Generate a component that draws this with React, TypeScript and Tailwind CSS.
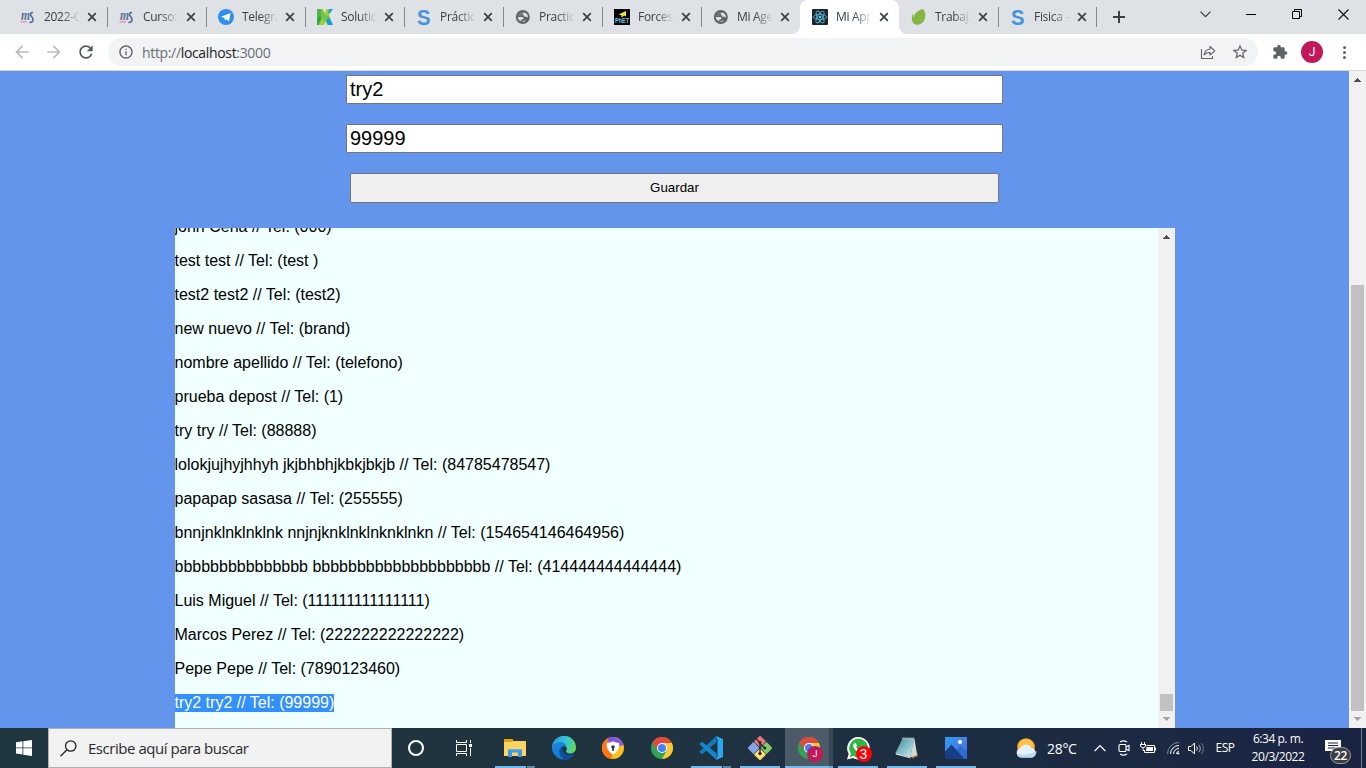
import React from "react";

const UI = "font-['Open_Sans','Noto_Sans',sans-serif]";

/* ---------- tab icons ---------- */

function MsIcon() {
  return (
    <svg width="16" height="16" viewBox="0 0 16 16" className="overflow-visible">
      <text x="1" y="11" fontSize="15" fontStyle="italic" fontWeight="bold" fontFamily="Liberation Serif" fill="#5a7199" textLength="9" lengthAdjust="spacingAndGlyphs">m</text>
      <path d="M13 3.500c-2.200 0-3 1.200-2.300 2.800.6 1.500 2.300 2 2.300 4.200 0 1.900-1.500 3-3.500 3" fill="none" stroke="#4a648e" strokeWidth="1.500" />
      <path d="M0.500 12.800h6.500" stroke="#ee9aa0" strokeWidth="1.600" />
    </svg>
  );
}

function TelegramIcon() {
  return (
    <svg width="16" height="16" viewBox="0 0 16 16">
      <circle cx="8" cy="8" r="8" fill="#2f8ded" />
      <path d="M3 7.800 12.600 4 11 12.200 8.300 10.300 6.900 11.600 6.500 9.100z" fill="#fff" />
      <path d="M6.700 9.200 10.600 5.900 7.300 9.800z" fill="#b5d7fa" />
    </svg>
  );
}

function KIcon() {
  return (
    <svg width="16" height="16" viewBox="0 0 16 16">
      <path d="M0 0h4.500v16H0z" fill="#4cb648" />
      <path d="M0 9l4.500-3v10H0z" fill="#2ea84a" />
      <path d="M9.500 0H15L7 16H1.500z" fill="#a0cf3c" />
      <path d="M4 0h1.500l4 8-2.500 5-3-6z" fill="#7cc242" />
      <path d="M12.500 0H16l-3.500 4.500-1.500-1.300z" fill="#06a3e0" />
      <path d="M9.500 7l2-1.500L16 16h-5.500L8 10.500z" fill="#7fc241" />
      <path d="M9 11.500l3-3L16 16h-5z" fill="#0a9fe3" />
    </svg>
  );
}

function SIcon() {
  return (
    <svg width="16" height="16" viewBox="0 0 16 16" className="overflow-visible">
      <text x="1" y="15.600" fontSize="21.500" fontWeight="bold" fontFamily="Liberation Sans" fill="#4693db" textLength="13.500" lengthAdjust="spacingAndGlyphs">S</text>
    </svg>
  );
}

function GlobeIcon() {
  return (
    <svg width="16" height="16" viewBox="0 0 16 16">
      <circle cx="7.800" cy="8" r="7" fill="#5f6368" />
      <path d="M2.700 7.200C3 4.800 4.800 3 7.300 2.700L8.600 4 7 5.200v1.300L5.300 7.300z" fill="#dee1e6" opacity=".15" />
      <path d="M9.200 3.400c-1 .4-1.700 1-1.700 1.700 0 .9 1.300.6 1.300 1.500 0 1 1 1.400 2.200 1.200 1-.1 1.100.8 2 .6.2-2.400-1.600-4.400-3.800-5z" fill="#dee1e6" />
      <path d="M2.800 7.900h3.900c1.300 0 1.800.7 1.800 1.500 0 .9-.8 1-1.700 1-.6 0-.6 1.200-1.300 1.600C4 11.200 2.900 9.800 2.800 7.900z" fill="#dee1e6" />
      <path d="M6.700 13l2.800-1.600 1.300.4C9.700 12.800 8.300 13.200 6.700 13z" fill="#dee1e6" />
    </svg>
  );
}

function PhetIcon() {
  return (
    <svg width="16" height="16" viewBox="0 0 16 16">
      <rect width="16" height="16" fill="#050505" />
      <path d="M4.500 5.500 12 2v5.500l-2-1-2.500 2.300L7.300 6z" fill="#f4e53b" />
      <text x="1" y="14.300" fontSize="6.500" fontWeight="bold" fontFamily="Liberation Sans" fill="#6dc8e8" textLength="14" lengthAdjust="spacingAndGlyphs">PhET</text>
    </svg>
  );
}

function ReactIcon() {
  return (
    <svg width="16" height="16" viewBox="0 0 16 16">
      <rect width="16" height="16" rx="1" fill="#20232a" />
      <g fill="none" stroke="#4fb3cc" strokeWidth="0.900">
        <ellipse cx="8" cy="8" rx="6.600" ry="2.600" />
        <ellipse cx="8" cy="8" rx="6.600" ry="2.600" transform="rotate(60 8 8)" />
        <ellipse cx="8" cy="8" rx="6.600" ry="2.600" transform="rotate(120 8 8)" />
      </g>
      <circle cx="8" cy="8" r="1.300" fill="#5cd3f0" />
    </svg>
  );
}

function LeafIcon() {
  return (
    <svg width="16" height="16" viewBox="0 0 16 16">
      <path d="M12 .3c2.300 1.500 3 6.500 1.500 10.200-1.500 4-5.500 6-9 5C1 14.500.5 10 1 7.500c.2-1.300.6-2.200.9-2.500.4 0 .5 3 .9 3.800C3 5 7 .8 12 .3z" fill="#82b541" />
    </svg>
  );
}

type Tab = { title: string; icon: () => React.ReactElement; active?: boolean; sep?: string };

const MID = "-mr-px";
const END = "mr-0";

const TABS: Tab[] = [
  { title: "2022-C", icon: MsIcon, sep: MID },
  { title: "Curso:", icon: MsIcon, sep: MID },
  { title: "Telegra", icon: TelegramIcon, sep: MID },
  { title: "Solutio", icon: KIcon, sep: MID },
  { title: "Práctic", icon: SIcon, sep: MID },
  { title: "Practic", icon: GlobeIcon, sep: MID },
  { title: "Forces", icon: PhetIcon, sep: MID },
  { title: "Mi Age", icon: GlobeIcon },
  { title: "Mi App", icon: ReactIcon, active: true },
  { title: "Trabaja", icon: LeafIcon, sep: MID },
  { title: "Fisica -", icon: SIcon, sep: END },
];

function TabItem({ title, icon: Icon, active, sep }: Tab) {
  return (
    <div className={`relative flex h-[34px] w-[99px] shrink-0 items-center pl-3 ${active ? "rounded-t-lg bg-white" : ""}`}>
      {active && (
        <>
          <svg className="absolute bottom-0 -left-2" width="8" height="8" viewBox="0 0 8 8"><path d="M8 0v8H0a8 8 0 0 0 8-8z" fill="#fff" /></svg>
          <svg className="absolute -right-2 bottom-0" width="8" height="8" viewBox="0 0 8 8"><path d="M0 0v8h8a8 8 0 0 1-8-8z" fill="#fff" /></svg>
        </>
      )}
      <Icon />
      <span className="ml-2 w-[36px] text-[12px] leading-4 tracking-[-0.3px] whitespace-nowrap text-[#3c4043] [mask-image:linear-gradient(to_right,black_50%,transparent_100%)]">
        {title}
      </span>
      <svg className="ml-[7px]" width="10" height="10" viewBox="0 0 10 10">
        <path d="M1.200 1.200l7.600 7.600M8.800 1.200L1.200 8.800" stroke="#3c4043" strokeWidth="1.700" />
      </svg>
      {sep && <span className={`ml-auto h-5 w-px bg-[#85888d] ${sep}`} />}
    </div>
  );
}

function TabStrip() {
  return (
    <div className="flex h-[34px] bg-[#dee1e6] pl-2">
      {TABS.map((t, i) => <TabItem key={i} {...t} />)}
      <div className="flex w-[43px] items-center justify-center">
        <svg width="12" height="12" viewBox="0 0 12 12"><path d="M6 0v12M0 6h12" stroke="#3c4043" strokeWidth="2" /></svg>
      </div>
      <div className="ml-auto flex h-7">
        <div className="flex w-[46px] items-center justify-center">
          <svg width="11" height="7" viewBox="0 0 11 7"><path d="M.5 .7l5 5 5-5" fill="none" stroke="#333" strokeWidth="1.100" /></svg>
        </div>
        <div className="flex w-[46px] items-center justify-center pt-px"><span className="h-px w-[10px] bg-black" /></div>
        <div className="flex w-[46px] items-center justify-center">
          <svg width="10" height="10" viewBox="0 0 10 10"><path d="M.5 2.500h7v7h-7zM2.500 2.500v-2h7v7h-2" fill="none" stroke="#000" /></svg>
        </div>
        <div className="flex w-[46px] items-center justify-center">
          <svg width="11" height="11" viewBox="0 0 11 11"><path d="M.5 .5l10 10M10.500 .5l-10 10" stroke="#111" strokeWidth="1.100" /></svg>
        </div>
      </div>
    </div>
  );
}

function Glyph({ d, size, color, className = "" }: { d: string; size: number; color: string; className?: string }) {
  return (
    <div className={`flex w-8 shrink-0 items-center justify-center ${className}`}>
      <svg width={size} height={size} viewBox="0 0 24 24" fill={color}><path d={d} /></svg>
    </div>
  );
}

const BACK = "M20 11H7.830l5.590-5.590L12 4l-8 8 8 8 1.410-1.410L7.830 13H20v-2z";
const FORWARD = "M4 11h12.170l-5.590-5.590L12 4l8 8-8 8-1.410-1.410L16.170 13H4v-2z";
const RELOAD = "M17.650 6.350C16.200 4.900 14.210 4 12 4c-4.420 0-7.990 3.580-7.990 8s3.570 8 7.990 8c3.730 0 6.840-2.550 7.730-6h-2.080c-.82 2.330-3.040 4-5.650 4-3.310 0-6-2.690-6-6s2.690-6 6-6c1.660 0 3.140.69 4.220 1.780L13 11h7V4l-2.350 2.350z";
const INFO = "M11 7h2v2h-2zm0 4h2v6h-2zm1-9C6.480 2 2 6.480 2 12s4.480 10 10 10 10-4.480 10-10S17.520 2 12 2zm0 18c-4.410 0-8-3.590-8-8s3.590-8 8-8 8 3.590 8 8-3.590 8-8 8z";
const STAR = "M22 9.240l-7.190-.62L12 2 9.190 8.630 2 9.240l5.460 4.730L5.820 21 12 17.270 18.180 21l-1.630-7.030L22 9.240zM12 15.400l-3.760 2.270 1-4.280-3.320-2.880 4.380-.38L12 6.100l1.710 4.040 4.380.38-3.320 2.880 1 4.280L12 15.400z";
const PUZZLE = "M20.500 11H19V7c0-1.100-.9-2-2-2h-4V3.500C13 2.120 11.880 1 10.500 1S8 2.120 8 3.500V5H4c-1.100 0-1.990.9-1.990 2v3.800H3.500c1.490 0 2.700 1.210 2.700 2.700s-1.210 2.700-2.700 2.700H2V20c0 1.100.9 2 2 2h3.800v-1.500c0-1.490 1.210-2.700 2.700-2.700 1.490 0 2.700 1.210 2.700 2.700V22H17c1.100 0 2-.9 2-2v-4h1.500c1.380 0 2.500-1.120 2.500-2.500S21.880 11 20.500 11z";

function Toolbar() {
  return (
    <div className="flex h-[37px] items-center border-b border-[#d5d8dd] bg-white pl-[6px]">
      <Glyph d={BACK} size={20} color="#babcbe" />
      <Glyph d={FORWARD} size={20} color="#babcbe" />
      <Glyph d={RELOAD} size={20} color="#55595e" />
      <div className="ml-[6px] flex h-7 w-[1150px] items-center rounded-full bg-[#f1f3f4] pr-[2px] pl-[2px]">
        <Glyph d={INFO} size={16} color="#5f6368" />
        <span className="text-[14px] tracking-[-0.34px] text-[#6b6f74]">
          http://<span className="text-[#202124]">localhost</span>:3000
        </span>
        <div className="ml-auto flex w-8 items-center justify-center">
          <svg width="16" height="15" viewBox="0 0 16 15" fill="none" stroke="#5f6368" strokeWidth="1.100">
            <path d="M1.500 4v9.500h11V11" />
            <path d="M4.200 9.800C4.600 6.300 6.500 4.300 10 4.200V1.500l4.800 4.300L10 10V7.500C7.200 7.400 5.600 8.200 4.200 9.800z" strokeLinejoin="round" />
          </svg>
        </div>
        <Glyph d={STAR} size={18} color="#5f6368" />
      </div>
      <Glyph d={PUZZLE} size={16} color="#5f6368" className="ml-[6px]" />
      <div className="flex w-8 justify-center">
        <span className="flex h-[22px] w-[22px] items-center justify-center rounded-full bg-[#c2185b] font-['Roboto',sans-serif] text-[12px] text-white">J</span>
      </div>
      <div className="flex w-[33px] flex-col items-center gap-[2px]">
        <span className="h-[3px] w-[3px] rounded-full bg-[#5f6368]" />
        <span className="h-[3px] w-[3px] rounded-full bg-[#5f6368]" />
        <span className="h-[3px] w-[3px] rounded-full bg-[#5f6368]" />
      </div>
    </div>
  );
}

/* ---------- page ---------- */

function Scrollbar({ thumb }: { thumb: string }) {
  return (
    <div className="flex w-[17px] shrink-0 flex-col items-center justify-between bg-[#f1f1f1]">
      <svg width="17" height="17" viewBox="0 0 17 17" shapeRendering="crispEdges"><path d="M8 7h1v1h1v1h1v1h1v1H5v-1h1V9h1V8h1z" fill="#505050" /></svg>
      <div className="flex flex-col items-center">
        <div className={`w-[13px] bg-[#c1c1c1] ${thumb}`} />
        <svg width="17" height="17" viewBox="0 0 17 17" shapeRendering="crispEdges"><path d="M5 6h7v1h-1v1h-1v1H9v1H8V9H7V8H6V7H5z" fill="#a3a3a3" /></svg>
      </div>
    </div>
  );
}

const CONTACTS = [
  "john Cena // Tel: (000)",
  "test test // Tel: (test )",
  "test2 test2 // Tel: (test2)",
  "new nuevo // Tel: (brand)",
  "nombre apellido // Tel: (telefono)",
  "prueba depost // Tel: (1)",
  "try try // Tel: (88888)",
  "lolokjujhyjhhyh jkjbhbhjkbkjbkjb // Tel: (84785478547)",
  "papapap sasasa // Tel: (255555)",
  "bnnjnklnklnklnk nnjnjknklnklnknklnkn // Tel: (154654146464956)",
  "bbbbbbbbbbbbbbb bbbbbbbbbbbbbbbbbbbb // Tel: (414444444444444)",
  "Luis Miguel // Tel: (111111111111111)",
  "Marcos Perez // Tel: (222222222222222)",
  "Pepe Pepe // Tel: (7890123460)",
  "try2 try2 // Tel: (99999)",
];

function Page() {
  return (
    <div className="flex h-[657px] font-['Liberation_Sans',Arial,sans-serif] text-black">
      <main className="flex flex-1 flex-col bg-[#6495ed] pt-1">
        <div className="ml-[346px] flex w-[657px] flex-col items-center gap-5">
          <input className="h-[29px] w-full rounded-[1px] border border-[#767676] bg-white px-[3px] text-[20px] leading-6 outline-none" defaultValue="try2" />
          <input className="h-[29px] w-full rounded-[1px] border border-[#767676] bg-white px-[3px] text-[20px] leading-6 outline-none" defaultValue="99999" />
          <button className="h-[30px] w-[649px] rounded-[2px] border border-[#767676] bg-[#efefef] text-[13.333px]">Guardar</button>
        </div>
        <section className="mt-[25px] flex h-[500px] w-[1175px] pl-[175px]">
          <div className="flex flex-1 flex-col items-start justify-end gap-4 overflow-hidden bg-[#f0ffff] pb-4">
            {CONTACTS.map((c, i) => (
              <p key={i} className={`-ml-[0.5px] h-[18px] shrink-0 text-[16px] leading-[18px] whitespace-nowrap ${i === 14 ? "bg-[#3390ff] text-white" : ""}`}>{c}</p>
            ))}
          </div>
          <Scrollbar thumb="h-[17px]" />
        </section>
      </main>
      <Scrollbar thumb="h-[426px]" />
    </div>
  );
}

/* ---------- taskbar ---------- */

function ChromeLogo({ size = 22 }: { size?: number }) {
  return (
    <svg width={size} height={size} viewBox="0 0 24 24">
      <circle cx="12" cy="12" r="12" fill="#2fa553" />
      <path d="M12 12 1.600 6A12 12 0 0 1 22.400 6z" fill="#e04a3f" />
      <path d="M12 6.500h10.700A12 12 0 0 1 12 24l5-9z" fill="#fcc934" />
      <path d="M1.600 6 7 15l5-8.500h10.700L22 5.300A12 12 0 0 0 1.600 6z" fill="#e04a3f" />
      <circle cx="12" cy="12" r="5.500" fill="#fff" />
      <circle cx="12" cy="12" r="4.400" fill="#4285f4" />
    </svg>
  );
}

function ExplorerLogo() {
  return (
    <svg width="22" height="20" viewBox="0 0 22 20">
      <path d="M0 3h22v15H0z" fill="#fcd462" />
      <path d="M0 1h8.500l1 1.500-1 1.500H0z" fill="#e3a008" />
      <path d="M4 11h14v8h-4v-4.500H8V19H4z" fill="#3f98e4" />
      <path d="M4 11h14v1.500H4z" fill="#5ab0f0" />
    </svg>
  );
}

function EdgeLogo() {
  return (
    <svg width="24" height="24" viewBox="0 0 24 24">
      <defs>
        <linearGradient id="edgeTop" x1="0" x2="1" y1=".3" y2=".6"><stop offset="0" stopColor="#249fe5" /><stop offset=".55" stopColor="#36c7d3" /><stop offset="1" stopColor="#65da58" /></linearGradient>
        <linearGradient id="edgeSide" x1="0" x2="0" y1="0" y2="1"><stop offset="0" stopColor="#1a87db" /><stop offset="1" stopColor="#1277cf" /></linearGradient>
      </defs>
      <path d="M0 12A12 12 0 0 1 24 11.500c0 4-3 6-6 6-2.500 0-4-1-4-2.200 0-.8 1-1.300 1-3L12 9z" fill="url(#edgeTop)" />
      <path d="M0 12c.5-4 4.500-6 8-6 4 0 7.200 3 7 6-.3-1.500-2-2.500-3.500-2-3 1.500-2 9.500 5 9.500 2 0 4-.6 5.500-1.300A12 12 0 0 1 0 12z" fill="url(#edgeSide)" />
      <path d="M11.500 10c-5 .5-6.500 9 1 14 4-.1 7.700-2.300 9.700-5.500.2-.5-.2-.7-.6-.5-5.800 2.600-11.400-.8-10.900-5.500.1-1 .4-1.900.8-2.500z" fill="#114f9c" />
    </svg>
  );
}

function ShieldLogo() {
  return (
    <svg width="22" height="22" viewBox="0 0 22 22">
      <circle cx="11" cy="11" r="11" fill="#fcc021" />
      <path d="M5 1.800A11 11 0 0 1 21.500 8L11 11z" fill="#8652e8" />
      <path d="M5 1.800A11 11 0 0 0 9.500 21.900L11 11z" fill="#ff7519" />
      <path d="M11 4.200c2 1.200 4 1.500 6.300 1.500.5 5-1.800 9.500-6.300 11.800-4.500-2.300-6.800-6.800-6.300-11.800 2.300 0 4.300-.3 6.300-1.500z" fill="#fff" />
      <circle cx="11" cy="10" r="1.700" fill="#29334b" /><path d="M10.200 10h1.600v4h-1.600z" fill="#29334b" />
    </svg>
  );
}

function CodeLogo() {
  return (
    <svg width="24" height="24" viewBox="0 0 24 24">
      <path d="M17.500 0v6.200L3 18.200 .3 15.800z" fill="#1279be" />
      <path d="M.3 8 3 5.700l14.500 11.600V24z" fill="#1387cf" />
      <path d="M17 0l7 3v18l-7 3 1.500-4V4z" fill="#2aa7f2" />
    </svg>
  );
}

function GitLogo() {
  return (
    <svg width="24" height="24" viewBox="0 0 24 24">
      <g strokeWidth="2" strokeLinejoin="round">
        <path d="M12 1l4.700 4.500L12 10 7.300 5.500z" fill="#ee7578" stroke="#ee7578" />
        <path d="M5.500 7.300l4.500 4.700-4.500 4.700L1 12z" fill="#86a6e8" stroke="#86a6e8" />
        <path d="M18.500 7.300L23 12l-4.500 4.700L14 12z" fill="#82ca66" stroke="#82ca66" />
        <path d="M12 14l4.700 4.500L12 23l-4.700-4.500z" fill="#ffdf73" stroke="#ffdf73" />
      </g>
      <path d="M8 2.500 12 6.500v11M12 7.500l4.500 4.500" stroke="#293035" strokeWidth="1.300" fill="none" />
      <circle cx="12" cy="6.500" r="1.600" fill="#293035" /><circle cx="12" cy="17.500" r="1.700" fill="#293035" /><circle cx="16.800" cy="12" r="1.600" fill="#293035" />
    </svg>
  );
}

function ProfileChrome() {
  return (
    <span className="relative flex">
      <ChromeLogo />
      <span className="absolute top-[9px] left-[9px] flex h-4 w-4 items-center justify-center rounded-full bg-[#c2185b] font-['Roboto',sans-serif] text-[9px] leading-none text-white">J</span>
    </span>
  );
}

function WhatsLogo() {
  return (
    <span className="relative flex">
      <svg width="23" height="23" viewBox="0 0 23 23">
        <path d="M11.500 0a11.200 11.200 0 1 1-5.600 20.900L0 22.500l1.700-5.700A11.200 11.200 0 0 1 11.500 0z" fill="#fff" />
        <path d="M11.500 1.800a9.400 9.400 0 1 1-5 17.300l-3.700 1 1.100-3.600A9.400 9.400 0 0 1 11.500 1.800z" fill="#2cb742" />
        <path d="M7.500 6c.6-.5 1.300-.3 1.500.2l.9 2c.2.600-.9 1.500-.7 1.900.9 1.700 2 2.800 3.700 3.500.6.2 1.200-1.400 1.900-1.100l2.200 1c.7 1-1 3-2.600 2.900-4-.2-8.500-5-8.200-8.300.1-.9.600-1.600 1.300-2.100z" fill="#fff" />
      </svg>
      <span className="absolute top-[9px] left-[9px] flex h-4 w-4 items-center justify-center rounded-full bg-[#fb0006] font-['Liberation_Sans',sans-serif] text-[14px] leading-none text-white">3</span>
    </span>
  );
}

function NotepadLogo() {
  return (
    <svg width="24" height="22" viewBox="0 0 24 22">
      <defs><linearGradient id="note" x1="0" x2="1" y1="0" y2="1"><stop offset="0" stopColor="#3f8798" /><stop offset=".6" stopColor="#93c8d2" /><stop offset="1" stopColor="#e6f2f2" /></linearGradient></defs>
      <path d="M18 2l5 17-6 2.500z" fill="#a98558" />
      <path d="M7.500 1.500h12L15 20.500 .5 16z" fill="url(#note)" />
      <path d="M.5 16 15 20.500l1 1L1 17.500z" fill="#eef3f3" />
      <path d="M19.500 1.500 22 18l-7 2.500z" fill="#d5d9d5" />
      <path d="M7.500 1.500h12" stroke="#dfe5e5" strokeWidth="2" strokeDasharray="1 1" />
    </svg>
  );
}

function PhotosLogo() {
  return (
    <svg width="22" height="22" viewBox="0 0 22 22">
      <defs><linearGradient id="sky" x1="0" x2="1" y1="0" y2="1"><stop offset="0" stopColor="#2f9df0" /><stop offset="1" stopColor="#5965df" /></linearGradient></defs>
      <rect width="22" height="22" fill="url(#sky)" />
      <path d="M11 13l5-4.500 6 6V22H11z" fill="#2d6bd0" />
      <path d="M0 14.500l6.500-7L19.500 22H0z" fill="#173f86" />
      <circle cx="15" cy="5" r="2.100" fill="#fff" />
    </svg>
  );
}

type AppEntry = { icon: React.ReactElement; bar: string };

const APPS: AppEntry[] = [
  { icon: <ExplorerLogo />, bar: "multi" },
  { icon: <EdgeLogo />, bar: "" },
  { icon: <ShieldLogo />, bar: "" },
  { icon: <ChromeLogo />, bar: "" },
  { icon: <CodeLogo />, bar: "multi" },
  { icon: <GitLogo />, bar: "single" },
  { icon: <ProfileChrome />, bar: "active" },
  { icon: <WhatsLogo />, bar: "single" },
  { icon: <NotepadLogo />, bar: "single" },
  { icon: <PhotosLogo />, bar: "single" },
];

function AppButton({ icon, bar }: AppEntry) {
  const active = bar === "active";
  return (
    <div className="flex h-10 w-[49px] shrink-0 pl-px">
      <div className={`flex w-12 flex-col items-center ${active ? "bg-linear-to-r from-[#4b5b67] from-[44px] via-[#2c3b48] via-[44px] to-[#3b4a58] to-[45px]" : ""}`}>
        <div className="flex h-[38px] items-center pt-[2px]">{icon}</div>
        {bar === "multi" && <div className="flex h-[2px] w-10"><span className="w-[31px] bg-[#76b9ed]" /><span className="ml-px flex-1 bg-[#5b87aa]" /></div>}
        {bar === "single" && <div className="h-[2px] w-10 bg-[#76b9ed]" />}
        {active && <div className="flex h-[2px] w-full"><span className="w-11 bg-[#76b9ed]" /><span className="flex-1 bg-[#6ba5d1]" /></div>}
      </div>
    </div>
  );
}

function Tray() {
  return (
    <div className="ml-[31px] flex items-center text-white">
      <div className="flex w-8 justify-center">
        <svg width="22" height="20" viewBox="0 0 22 20">
          <circle cx="10" cy="9" r="8.800" fill="#fcae2f" /><circle cx="10" cy="8" r="7" fill="#ffc044" />
          <path d="M5 19.500a4.700 4.700 0 0 1-.5-9.300A6 6 0 0 1 15.300 9.800 5 5 0 0 1 16 19.500z" fill="#e4f0fa" />
          <path d="M1 15c4 3 14 2 19.500-2-.2 4-2 6.500-5 6.500H5C3 19.500 1 17.500 1 15z" fill="#b8d9f2" />
        </svg>
      </div>
      <span className="w-[45px] pl-1 text-[14px] tracking-[-0.3px]">28°C</span>
      <div className="flex w-6 justify-center"><svg width="12" height="8" viewBox="0 0 12 8"><path d="M.7 7 6 1.500 11.300 7" fill="none" stroke="#fff" strokeWidth="1.200" /></svg></div>
      <div className="flex w-6 justify-center">
        <svg width="12" height="16" viewBox="0 0 12 16" fill="none" stroke="#fff" strokeWidth="1.100"><rect x="1" y="4.500" width="7" height="7" rx="1" /><path d="M8 7l3-1.500v5L8 9M2 2c2-1.300 5-1.300 7 0M2 14c2 1.300 5 1.300 7 0" /></svg>
      </div>
      <div className="flex w-6 justify-center">
        <svg width="16" height="13" viewBox="0 0 16 13"><path d="M6.500 3.500h8v7h-10V8" fill="none" stroke="#fff" /><path d="M6.500 5h6.500v4H6zM15 5.500h1v3h-1z" fill="#fff" /><path d="M1.500 0v2M4.500 0v2M0 2.500h6M.5 2.500V4a2 2 0 0 0 2 1.500h1a2 2 0 0 0 2-1.500V2.500M3 5.500v3h1.500" fill="none" stroke="#fff" /></svg>
      </div>
      <div className="flex w-[26px] justify-center">
        <svg width="14" height="14" viewBox="0 0 14 14" fill="none" stroke="#fff"><path d="M10.500 13a2.500 2.500 0 0 1 2.500-2.500M7.500 13A5.500 5.500 0 0 1 13 7.500M4.500 13A8.500 8.500 0 0 1 13 4.500" /><path d="M1.500 13A11.500 11.500 0 0 1 13 1.500" stroke="#7c879a" /><circle cx="12.300" cy="12.500" r="1.100" fill="#fff" stroke="none" /></svg>
      </div>
      <div className="flex w-[20px] justify-center">
        <svg width="17" height="13" viewBox="0 0 17 13" fill="none" stroke="#fff"><path d="M.5 4.500H3L6.500 1v11L3 8.500H.5z" /><path d="M8.500 4.500a3 3 0 0 1 0 4" /><path d="M10.800 2.800a5.500 5.500 0 0 1 0 7.400" stroke="#b0b8c6" /><path d="M13.200 1a8 8 0 0 1 0 11" stroke="#69758a" /></svg>
      </div>
      <span className="ml-[2px] w-[34px] text-center text-[12px] tracking-[-0.5px]">ESP</span>
      <div className="w-[72px] text-center text-[12px] leading-[18px] tracking-[-0.45px] whitespace-nowrap"><div>6:34 p. m.</div><div>20/3/2022</div></div>
      <div className="relative flex h-10 w-[47px] pt-[11px] pl-[11px]">
        <svg width="16" height="16" viewBox="0 0 16 16"><path d="M0 1h16v11h-4v4l-4-4H0z" fill="#fff" /><path d="M3 4h10M3 6.500h10M3 9h7" stroke="#1a2742" /></svg>
        <span className="absolute top-[19px] left-[16px] flex h-[17px] w-[21px] items-center justify-center rounded-full border border-[#9a9da1] bg-[#3b3e43] text-[12px] leading-none font-semibold tracking-[-0.3px]">22</span>
      </div>
      <span className="h-10 w-px bg-[#6d788a]" />
    </div>
  );
}

function Taskbar() {
  return (
    <div className="flex h-10 bg-linear-to-r from-[#20363e] via-[#203340] to-[#192443]">
      <div className="flex w-12 items-center justify-center">
        <svg width="16" height="16" viewBox="0 0 16 16" fill="#fff"><path d="M0 2.200 6.500 1.300v6.200H0zM7.300 1.200 16 0v7.500H7.300zM0 8.300h6.500v6.200L0 13.600zM7.300 8.300H16V16l-8.700-1.200z" /></svg>
      </div>
      <div className="flex w-[344px] items-center border border-[#b1b1b1] bg-[#f2f2f2] pl-[11px]">
        <svg width="17" height="17" viewBox="0 0 17 17" fill="none" stroke="#222" strokeWidth="1.300"><circle cx="10.700" cy="6" r="5.200" /><path d="M7 9.700.5 16.200" /></svg>
        <span className="ml-[11px] text-[15px] tracking-[-0.46px] text-[#2b2b2b]">Escribe aquí para buscar</span>
      </div>
      <div className="flex w-12 items-center justify-center"><span className="h-4 w-4 rounded-full border-2 border-white" /></div>
      <div className="flex w-[50px] items-center pl-[16px]">
        <svg width="17" height="16" viewBox="0 0 17 16" fill="none" stroke="#fff"><path d="M.5 0v2.500h10V0M.5 4.500h10v7H.5zM.5 16v-2.500h10V16M14.500 0v3M14.500 8v8" /><path d="M13 4h3v3h-3z" fill="#fff" stroke="none" /></svg>
      </div>
      {APPS.map((a, i) => <AppButton key={i} {...a} />)}
      <Tray />
    </div>
  );
}

export default function App() {
  return (
    <div className={`flex h-[768px] w-[1366px] flex-col overflow-hidden ${UI}`}>
      <TabStrip />
      <Toolbar />
      <Page />
      <Taskbar />
    </div>
  );
}
